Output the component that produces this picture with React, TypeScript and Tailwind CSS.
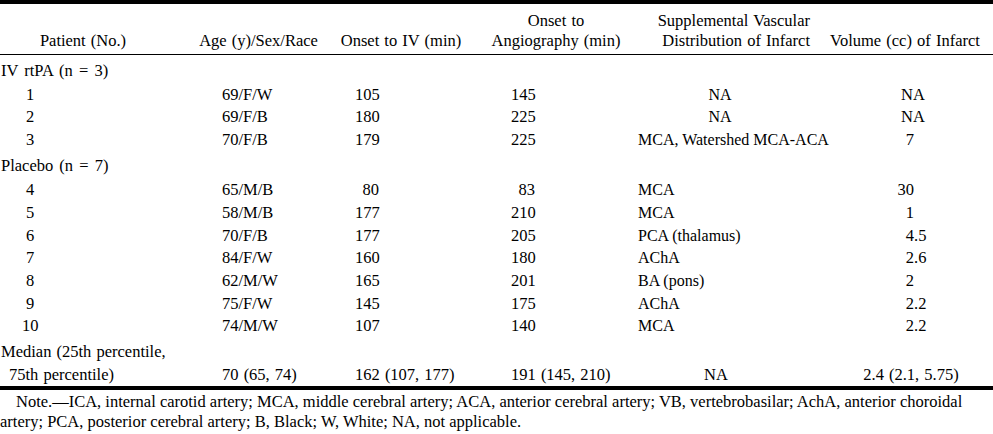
const cols = "grid grid-cols-[166px_174px_150px_140px_185px_178px]";

type Row = {
  no: string;
  age: string;
  iv: string;
  ang: string;
  dist: string;
  vol: string;
};

const groups: { label: string; rows: Row[] }[] = [
  {
    label: "IV rtPA (n = 3)",
    rows: [
      { no: "1", age: "69/F/W", iv: "105", ang: "145", dist: "NA", vol: "NA" },
      { no: "2", age: "69/F/B", iv: "180", ang: "225", dist: "NA", vol: "NA" },
      { no: "3", age: "70/F/B", iv: "179", ang: "225", dist: "MCA, Watershed MCA-ACA", vol: "7" },
    ],
  },
  {
    label: "Placebo (n = 7)",
    rows: [
      { no: "4", age: "65/M/B", iv: "80", ang: "83", dist: "MCA", vol: "30" },
      { no: "5", age: "58/M/B", iv: "177", ang: "210", dist: "MCA", vol: "1" },
      { no: "6", age: "70/F/B", iv: "177", ang: "205", dist: "PCA (thalamus)", vol: "4.5" },
      { no: "7", age: "84/F/W", iv: "160", ang: "180", dist: "AChA", vol: "2.6" },
      { no: "8", age: "62/M/W", iv: "165", ang: "201", dist: "BA (pons)", vol: "2" },
      { no: "9", age: "75/F/W", iv: "145", ang: "175", dist: "AChA", vol: "2.2" },
      { no: "10", age: "74/M/W", iv: "107", ang: "140", dist: "MCA", vol: "2.2" },
    ],
  },
];

function Volume({ value }: { value: string }) {
  if (value === "NA") {
    return <span className="inline-block w-[196px] text-center">NA</span>;
  }
  const [whole, frac] = value.split(".");
  return (
    <span className="flex">
      <span className="w-[99px] text-right">{whole}</span>
      {frac && <span>.{frac}</span>}
    </span>
  );
}

function DataRow({ row }: { row: Row }) {
  return (
    <div className={`${cols} whitespace-nowrap`}>
      <div className="pl-[22px]">
        <span className="inline-block w-[16px] text-center">{row.no}</span>
      </div>
      <div className="pl-[56px]">{row.age}</div>
      <div className="pl-[15px]">
        <span className="inline-block w-[24px] text-right">{row.iv}</span>
      </div>
      <div className="pl-[21px]">
        <span className="inline-block w-[24px] text-right">{row.ang}</span>
      </div>
      <div className="text-[16px]">
        {row.dist === "NA" ? (
          <span className="inline-block w-[180px] text-center">NA</span>
        ) : (
          <span className="pl-[8px]">{row.dist}</span>
        )}
      </div>
      <div>
        <Volume value={row.vol} />
      </div>
    </div>
  );
}

export default function App() {
  return (
    <div className="w-[993px] h-[434px] overflow-hidden bg-white text-black font-['Liberation_Serif',serif] text-[16.5px]">
      {/* Top rule */}
      <div className="h-[4px] bg-black" />

      {/* Header */}
      <div className={`${cols} items-end whitespace-nowrap pt-[7px] pb-[3px] leading-[20px] [word-spacing:1px]`}>
        <div className="flex justify-center">Patient (No.)</div>
        <div className="flex justify-center pl-[11px]">Age (y)/Sex/Race</div>
        <div className="flex justify-center pr-[28px]">Onset to IV (min)</div>
        <div className="flex flex-col items-center pr-[8px]">
          <span>Onset to</span>
          <span>Angiography (min)</span>
        </div>
        <div className="flex flex-col items-end pr-[5px]">
          <span>Supplemental Vascular</span>
          <span>Distribution of Infarct</span>
        </div>
        <div className="flex justify-center pl-[2px]">Volume (cc) of Infarct</div>
      </div>
      <div className="h-px bg-black" />

      {/* Body */}
      <div className="leading-[22.67px]">
        {groups.map((g, i) => (
          <div key={g.label}>
            <div
              className={`pl-px [word-spacing:2px] ${
                i === 0 ? "pt-[5px] pb-px" : "pt-[3px] pb-[2px]"
              }`}
            >
              {g.label}
            </div>
            {g.rows.map((r) => (
              <DataRow key={r.no} row={r} />
            ))}
          </div>
        ))}

        {/* Median */}
        <div className={`${cols} items-end whitespace-nowrap pt-[3px] [word-spacing:1px]`}>
          <div className="pl-px">
            <div>Median (25th percentile,</div>
            <div className="pl-[8px]">75th percentile)</div>
          </div>
          <div className="pl-[56px]">70 (65, 74)</div>
          <div className="pl-[15px]">162 (107, 177)</div>
          <div className="pl-[21px]">191 (145, 210)</div>
          <div>
            <span className="inline-block w-[172px] text-center">NA</span>
          </div>
          <div>
            <span className="inline-block w-[192px] text-center">2.4 (2.1, 5.75)</span>
          </div>
        </div>
      </div>

      {/* Bottom rule */}
      <div className="h-[4px] bg-black" />

      {/* Note */}
      <p className="mt-[2px] indent-[16px] leading-[20px]">
        Note.—ICA, internal carotid artery; MCA, middle cerebral artery; ACA,
        anterior cerebral artery; VB, vertebrobasilar; AchA, anterior choroidal
        artery; PCA, posterior cerebral artery; B, Black; W, White; NA, not
        applicable.
      </p>
    </div>
  );
}
